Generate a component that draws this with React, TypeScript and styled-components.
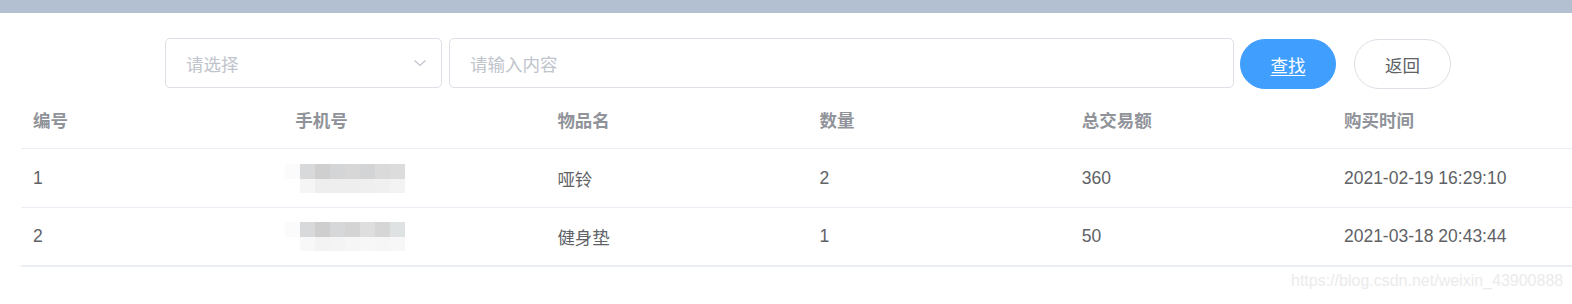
import React from "react";
import styled, { createGlobalStyle } from "styled-components";

const GlobalStyle = createGlobalStyle`
  html, body {
    margin: 0;
    padding: 0;
    background: #fff;
    overflow: hidden;
  }
  body {
    font-family: "Liberation Sans", Arial, "Noto Sans CJK SC", sans-serif;
  }
`;

const Page = styled.div`
  position: relative;
  width: 1572px;
  height: 304px;
  overflow: hidden;
`;

const TopBar = styled.div`
  height: 13px;
  background: #b3c0d1;
`;

const Toolbar = styled.div`
  display: flex;
  align-items: flex-start;
  margin-top: 25px;
  padding-left: 165px;
`;

const Field = styled.div<{ w: number }>`
  position: relative;
  box-sizing: border-box;
  width: ${(p) => p.w}px;
  height: 50px;
  border: 1px solid #dcdfe6;
  border-radius: 5px;
  display: flex;
  align-items: center;
  padding-left: 20px;
  font-size: 17.5px;
  color: #c0c4cc;
  margin-right: ${(p) => (p.w > 500 ? 6 : 7)}px;
`;

const Chevron = styled.svg`
  position: absolute;
  right: 14px;
  top: 19px;
  width: 14px;
  height: 10px;
`;

const Pill = styled.button<{ primary?: boolean }>`
  box-sizing: border-box;
  margin-top: 1px;
  width: ${(p) => (p.primary ? 96 : 97)}px;
  height: 50px;
  border-radius: 25px;
  font-family: inherit;
  font-size: 17.5px;
  padding: 0;
  border: 1px solid ${(p) => (p.primary ? "#409eff" : "#dcdfe6")};
  background: ${(p) => (p.primary ? "#409eff" : "#fff")};
  color: ${(p) => (p.primary ? "#fff" : "#606266")};
  margin-right: 18px;
  text-decoration: ${(p) => (p.primary ? "underline" : "none")};
  text-underline-offset: 3px;
`;

const Table = styled.div`
  margin-top: 2px;
  margin-left: 21px;
  width: 1573px;
  border-bottom: 1px solid #ebeef5;
`;

const Row = styled.div<{ h: number }>`
  display: grid;
  grid-template-columns: repeat(6, 262.2px);
  height: ${(p) => p.h}px;
  border-bottom: 1px solid #ebeef5;
  align-items: center;
`;

const HeadCell = styled.div`
  padding-left: 12px;
  font-size: 17.5px;
  font-weight: bold;
  color: #909399;
`;

const Cell = styled.div`
  padding-left: 12px;
  font-size: 17.5px;
  color: #606266;
  display: flex;
  align-items: center;
`;

const Mosaic = styled.div`
  display: grid;
  grid-template-columns: repeat(8, 15px);
  grid-template-rows: 15px 14px;
  margin-left: -10px;
`;

const Tile = styled.div<{ c: string }>`
  background: ${(p) => p.c};
`;

const Watermark = styled.div`
  position: absolute;
  left: 1291px;
  top: 272px;
  font-size: 16px;
  color: #ebebeb;
  white-space: nowrap;
`;

const mosaics = [
  [
    ["#fbfbfb", "#d8d9db", "#cfcfcf", "#d4d5d7", "#d7d7d7", "#d3d4d6", "#dadada", "#dcdcdc"],
    ["#fff", "#f5f5f5", "#eeeeee", "#eeeeee", "#eeeeee", "#efefef", "#f0f0f0", "#f3f3f3"],
  ],
  [
    ["#fbfbfb", "#d8d9db", "#cecece", "#d6d7d9", "#d4d4d4", "#dedede", "#d6d6d6", "#dee2e3"],
    ["#fff", "#f8f8f8", "#f3f3f3", "#f4f4f4", "#f6f6f6", "#f7f7f7", "#f6f6f6", "#f7f7f7"],
  ],
];

const PhoneMask = ({ idx }: { idx: number }) => (
  <Mosaic>
    {mosaics[idx].flat().map((c, i) => (
      <Tile key={i} c={c} />
    ))}
  </Mosaic>
);

const headers = ["编号", "手机号", "物品名", "数量", "总交易额", "购买时间"];

const rows = [
  { id: "1", name: "哑铃", qty: "2", total: "360", time: "2021-02-19 16:29:10" },
  { id: "2", name: "健身垫", qty: "1", total: "50", time: "2021-03-18 20:43:44" },
];

export default function App() {
  return (
    <Page>
      <GlobalStyle />
      <TopBar />
      <Toolbar>
        <Field w={277}>
          请选择
          <Chevron viewBox="0 0 14 10">
            <polyline points="1.5,2.5 7,7.5 12.5,2.5" fill="none" stroke="#c0c4cc" strokeWidth="1.2" />
          </Chevron>
        </Field>
        <Field w={785}>请输入内容</Field>
        <Pill primary>查找</Pill>
        <Pill>返回</Pill>
      </Toolbar>
      <Table>
        <Row h={57}>
          {headers.map((h) => (
            <HeadCell key={h}>{h}</HeadCell>
          ))}
        </Row>
        {rows.map((r, i) => (
          <Row key={r.id} h={i === 0 ? 58 : 57}>
            <Cell>{r.id}</Cell>
            <Cell>
              <PhoneMask idx={i} />
            </Cell>
            <Cell>{r.name}</Cell>
            <Cell>{r.qty}</Cell>
            <Cell>{r.total}</Cell>
            <Cell>{r.time}</Cell>
          </Row>
        ))}
      </Table>
      <Watermark>https://blog.csdn.net/weixin_43900888</Watermark>
    </Page>
  );
}
